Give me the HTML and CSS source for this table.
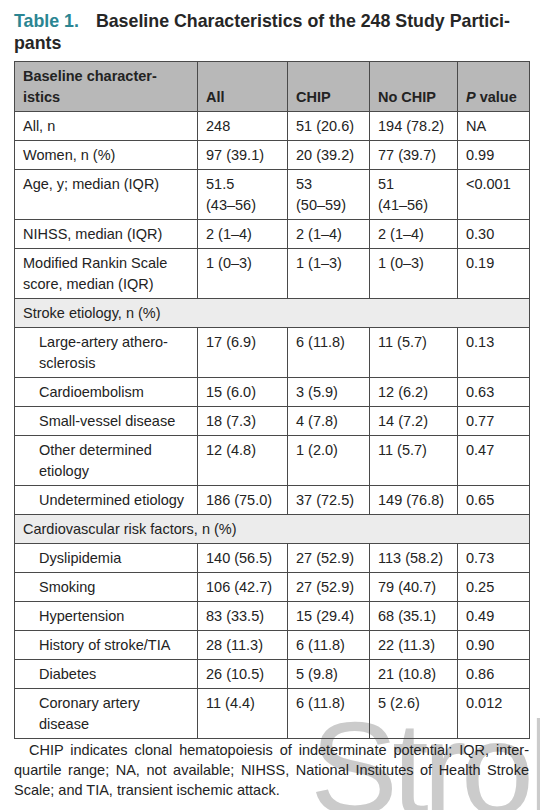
FILE: index.html
```html
<!DOCTYPE html>
<html>
<head>
	<meta charset="utf-8">
	<title>Table 1. Baseline Characteristics of the 248 Study Participants</title>
	<link rel="stylesheet" href="styles.css">
</head>
<body>
	<div class="backdrop"><span class="watermark">Stroke</span></div>

	<h1><span class="num">Table 1.</span>Baseline Characteristics of the 248 Study Partici-<br>pants</h1>

	<table>
		<colgroup>
			<col class="c-label">
			<col class="c-all">
			<col class="c-chip">
			<col class="c-nochip">
			<col class="c-p">
		</colgroup>
		<tr class="head">
			<th>Baseline character-<br>istics</th>
			<th>All</th>
			<th>CHIP</th>
			<th>No CHIP</th>
			<th><i>P</i> value</th>
		</tr>
		<tr>
			<td>All, n</td>
			<td>248</td>
			<td>51 (20.6)</td>
			<td>194 (78.2)</td>
			<td>NA</td>
		</tr>
		<tr>
			<td>Women, n (%)</td>
			<td>97 (39.1)</td>
			<td>20 (39.2)</td>
			<td>77 (39.7)</td>
			<td>0.99</td>
		</tr>
		<tr>
			<td>Age, y; median (IQR)</td>
			<td>51.5<br>(43–56)</td>
			<td>53<br>(50–59)</td>
			<td>51<br>(41–56)</td>
			<td>&lt;0.001</td>
		</tr>
		<tr>
			<td>NIHSS, median (IQR)</td>
			<td>2 (1–4)</td>
			<td>2 (1–4)</td>
			<td>2 (1–4)</td>
			<td>0.30</td>
		</tr>
		<tr>
			<td>Modified Rankin Scale<br>score, median (IQR)</td>
			<td>1 (0–3)</td>
			<td>1 (1–3)</td>
			<td>1 (0–3)</td>
			<td>0.19</td>
		</tr>
		<tr class="group">
			<td colspan="5">Stroke etiology, n (%)</td>
		</tr>
		<tr>
			<td class="sub">Large-artery athero-<br>sclerosis</td>
			<td>17 (6.9)</td>
			<td>6 (11.8)</td>
			<td>11 (5.7)</td>
			<td>0.13</td>
		</tr>
		<tr>
			<td class="sub">Cardioembolism</td>
			<td>15 (6.0)</td>
			<td>3 (5.9)</td>
			<td>12 (6.2)</td>
			<td>0.63</td>
		</tr>
		<tr>
			<td class="sub">Small-vessel disease</td>
			<td>18 (7.3)</td>
			<td>4 (7.8)</td>
			<td>14 (7.2)</td>
			<td>0.77</td>
		</tr>
		<tr>
			<td class="sub">Other determined<br>etiology</td>
			<td>12 (4.8)</td>
			<td>1 (2.0)</td>
			<td>11 (5.7)</td>
			<td>0.47</td>
		</tr>
		<tr>
			<td class="sub">Undetermined etiology</td>
			<td>186 (75.0)</td>
			<td>37 (72.5)</td>
			<td>149 (76.8)</td>
			<td>0.65</td>
		</tr>
		<tr class="group">
			<td colspan="5">Cardiovascular risk factors, n (%)</td>
		</tr>
		<tr>
			<td class="sub">Dyslipidemia</td>
			<td>140 (56.5)</td>
			<td>27 (52.9)</td>
			<td>113 (58.2)</td>
			<td>0.73</td>
		</tr>
		<tr>
			<td class="sub">Smoking</td>
			<td>106 (42.7)</td>
			<td>27 (52.9)</td>
			<td>79 (40.7)</td>
			<td>0.25</td>
		</tr>
		<tr>
			<td class="sub">Hypertension</td>
			<td>83 (33.5)</td>
			<td>15 (29.4)</td>
			<td>68 (35.1)</td>
			<td>0.49</td>
		</tr>
		<tr>
			<td class="sub">History of stroke/TIA</td>
			<td>28 (11.3)</td>
			<td>6 (11.8)</td>
			<td>22 (11.3)</td>
			<td>0.90</td>
		</tr>
		<tr>
			<td class="sub">Diabetes</td>
			<td>26 (10.5)</td>
			<td>5 (9.8)</td>
			<td>21 (10.8)</td>
			<td>0.86</td>
		</tr>
		<tr>
			<td class="sub">Coronary artery<br>disease</td>
			<td>11 (4.4)</td>
			<td>6 (11.8)</td>
			<td>5 (2.6)</td>
			<td>0.012</td>
		</tr>
	</table>

	<p class="note">CHIP indicates clonal hematopoiesis of indeterminate potential; IQR, inter&shy;quartile range; NA, not available; NIHSS, National Institutes of Health Stroke Scale; and TIA, transient ischemic attack.</p>
</body>
</html>
```

FILE: styles.css
```css
body
{
	margin: 0;
	padding: 0 11px 0 14px;
	font-family: "Liberation Sans", Arial, sans-serif;
	color: #232323;
	background: #fff;
}

/* faint journal name behind the foot of the page */
.backdrop
{
	position: absolute;
	left: 0;
	top: 0;
	width: 540px;
	height: 810px;
	overflow: hidden;
	z-index: 0;
}

.watermark
{
	position: absolute;
	left: 310px;
	top: 703px;
	font-size: 132px;
	line-height: 1;
	color: #cbcbcb;
	white-space: nowrap;
	letter-spacing: -6px;
}

h1
{
	position: relative;
	margin: 0;
	padding-top: 10px;
	font-size: 17.8px;
	line-height: 22px;
	font-weight: bold;
	color: #262626;
}

h1 .num
{
	color: #2b8592;
	margin-right: 17px;
}

table
{
	position: relative;
	margin-top: 7px;
	width: 515px;
	table-layout: fixed;
	border-collapse: collapse;
	font-size: 14.5px;
	line-height: 21px;
}

col.c-label { width: 183px; }
col.c-all { width: 90px; }
col.c-chip { width: 82px; }
col.c-nochip { width: 88px; }
col.c-p { width: 72px; }

td, th
{
	border: solid 1px #4a4a4a;
	padding: 4px 4px 3px 8px;
	text-align: left;
	vertical-align: top;
	font-weight: normal;
}

tr.head th
{
	background: #b8b8b8;
	font-weight: bold;
	vertical-align: bottom;
}

tr.group td
{
	background: #ececec;
}

td.sub
{
	padding-left: 24px;
}

p.note
{
	position: relative;
	margin: 1px 0 0 0;
	width: 515px;
	font-size: 14.5px;
	line-height: 20px;
	text-align: justify;
	text-indent: 15px;
	hyphens: manual;
}
```
